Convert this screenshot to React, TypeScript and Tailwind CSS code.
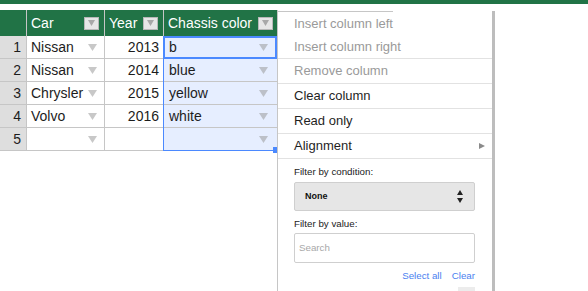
import React from 'react';

const Tri = ({ color = '#c8c8c8' }: { color?: string }) => (
  <svg width="9" height="7" viewBox="0 0 9 7" className="shrink-0">
    <polygon points="0,0 9,0 4.5,7" fill={color} />
  </svg>
);

const HeadBtn = () => (
  <div className="w-[15px] h-[13px] bg-[#e6e6e6] border border-[#b8b8b8] flex items-center justify-center shrink-0">
    <svg width="7" height="6" viewBox="0 0 7 6">
      <polygon points="0,0 7,0 3.5,6" fill="#a8a8a8" />
    </svg>
  </div>
);

export default function App() {
  const rows = [
    ['1', 'Nissan', '2013', 'b'],
    ['2', 'Nissan', '2014', 'blue'],
    ['3', 'Chrysler', '2015', 'yellow'],
    ['4', 'Volvo', '2016', 'white'],
    ['5', '', '', ''],
  ];
  return (
    <div className="relative w-[588px] h-[291px] overflow-hidden bg-white font-['Liberation_Sans',Arial,sans-serif]">
      <div className="h-[4px] bg-[#217346]" />
      <div className="mt-[6px] relative w-[278px]">
        {/* header */}
        <div className="flex h-[26px] bg-[#217346] text-white text-[14px]">
          <div className="w-[27px] border-r border-[#c6c6c6]" />
          <div className="w-[78px] border-r border-[#c6c6c6] flex items-center pl-[4px] pr-[5px]">
            <span>Car</span>
            <div className="ml-auto"><HeadBtn /></div>
          </div>
          <div className="w-[59px] border-r border-[#c6c6c6] flex items-center pl-[4px] pr-[5px]">
            <span>Year</span>
            <div className="ml-auto"><HeadBtn /></div>
          </div>
          <div className="w-[114px] border-r border-[#c6c6c6] flex items-center pl-[4px] pr-[4px]">
            <span>Chassis color</span>
            <div className="ml-auto"><HeadBtn /></div>
          </div>
        </div>
        {rows.map((r) => (
          <div key={r[0]} className="flex h-[23px] text-[14px] text-[#1c1c1c]">
            <div className="w-[27px] bg-[#dedede] border-r border-b border-[#c6c6c6] flex items-center justify-end pr-[5px]">
              {r[0]}
            </div>
            <div className="w-[78px] border-r border-b border-[#c6c6c6] flex items-center pl-[4px] pr-[7px]">
              <span>{r[1]}</span>
              <div className="ml-auto"><Tri /></div>
            </div>
            <div className="w-[59px] border-r border-b border-[#c6c6c6] flex items-center justify-end pr-[4px]">
              {r[2]}
            </div>
            <div className="w-[114px] bg-[#e6eeff] border-r border-b border-[#c6c6c6] flex items-center pl-[5px] pr-[9px]">
              <span>{r[3]}</span>
              <div className="ml-auto"><Tri color="#bcc0c8" /></div>
            </div>
          </div>
        ))}
        {/* selection overlays */}
        <div className="absolute left-[163px] top-[26px] w-[115px] h-[115px] border-l border-b border-[#4b89ff] pointer-events-none" />
        <div className="absolute left-[163px] top-[26px] w-[114px] h-[23px] border-2 border-[#4b89ff] pointer-events-none" />
        <div className="absolute left-[273px] top-[137px] w-[5px] h-[6px] bg-[#4b89ff]" />
      </div>

      {/* context menu */}
      <div className="absolute left-[277px] top-[11px] w-[218px] h-[300px] bg-white border-l border-[#c6c6c6] border-r-[3px] border-r-[#bdbdbd] text-[13px]">
        <div className="absolute left-0 top-0 w-[115px] h-px bg-[#c6c6c6]" />
        <div className="pt-[2px]">
          <div className="h-[22px] flex items-center pl-[16px] text-[#9a9a9a]">Insert column left</div>
          <div className="h-[24px] flex items-center pl-[16px] text-[#9a9a9a] border-b border-[#e2e2e2]">Insert column right</div>
          <div className="h-[25px] flex items-center pl-[16px] text-[#9a9a9a] border-b border-[#e2e2e2]">Remove column</div>
          <div className="h-[25px] flex items-center pl-[16px] text-[#1f1f1f] border-b border-[#e2e2e2]">Clear column</div>
          <div className="h-[25px] flex items-center pl-[16px] text-[#1f1f1f] border-b border-[#e2e2e2]">Read only</div>
          <div className="h-[25px] flex items-center pl-[16px] pr-[7px] text-[#1f1f1f] border-b border-[#e2e2e2]">
            <span>Alignment</span>
            <svg width="6" height="6" viewBox="0 0 6 6" className="ml-auto">
              <polygon points="0,0 6,3 0,6" fill="#8a8a8a" />
            </svg>
          </div>
        </div>
        <div className="pl-[16px] pr-[17px] text-[9.75px] text-[#222]">
          <div className="pt-[7px] leading-[12px]">Filter by condition:</div>
          <div className="mt-[4px] h-[29px] bg-[#e6e6e6] border border-[#cfcfcf] rounded-[2px] flex items-center pl-[10px] pr-[11px]">
            <span className="font-bold text-[9px] text-[#111]">None</span>
            <svg width="6" height="13" viewBox="0 0 6 13" className="ml-auto">
              <polygon points="3,0 6,5 0,5" fill="#222" />
              <polygon points="0,8 6,8 3,13" fill="#222" />
            </svg>
          </div>
          <div className="mt-[7px] leading-[12px]">Filter by value:</div>
          <div className="mt-[3px] h-[30px] bg-white border border-[#cfcfcf] rounded-[2px] flex items-center pl-[4px] text-[#a8a8a8]">
            Search
          </div>
          <div className="mt-[7px] leading-[12px] flex justify-end gap-[10px] text-[#4a7ff0]">
            <span>Select all</span>
            <span>Clear</span>
          </div>
          <div className="mt-[5px] flex justify-end">
            <div className="w-[17px] h-[10px] bg-[#ececec]" />
          </div>
        </div>
      </div>
    </div>
  );
}
